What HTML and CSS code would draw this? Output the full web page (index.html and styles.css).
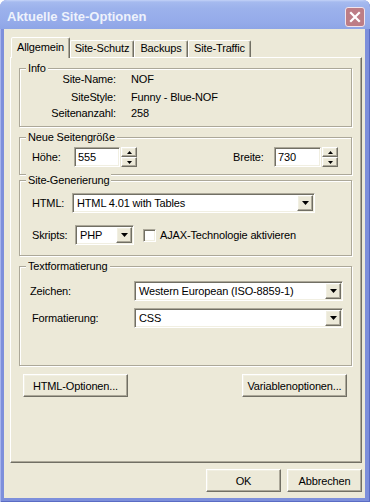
FILE: index.html
```html
<!DOCTYPE html>
<html lang="de">
<head>
    <meta charset="UTF-8">
    <title>Aktuelle Site-Optionen</title>
    <link rel="stylesheet" href="styles.css">
</head>
<body>
    <div class="window">
        <div class="titlebar">
            <span class="title">Aktuelle Site-Optionen</span>
            <span class="close">
                <svg width="12" height="12" viewBox="0 0 12 12"><path d="M2 2 L10 10 M10 2 L2 10" stroke="#fff" stroke-width="2.2" stroke-linecap="square"/></svg>
            </span>
        </div>

        <div class="client">
            <div class="tabs">
                <div class="tab active tab-allgemein">Allgemein</div>
                <div class="tab tab-schutz">Site-Schutz</div>
                <div class="tab tab-backups">Backups</div>
                <div class="tab tab-traffic">Site-Traffic</div>
            </div>

            <div class="panel">
                <div class="group group-info">
                    <div class="group-title">Info</div>
                    <div class="group-body info-grid">
                        <span class="info-label">Site-Name:</span><span>NOF</span>
                        <span class="info-label">SiteStyle:</span><span>Funny - Blue-NOF</span>
                        <span class="info-label">Seitenanzahl:</span><span>258</span>
                    </div>
                </div>

                <div class="group group-size">
                    <div class="group-title">Neue Seitengröße</div>
                    <div class="group-body">
                        <div class="row">
                            <span class="lbl lbl-hoehe">Höhe:</span>
                            <span class="field edit edit-hoehe">555</span>
                            <span class="spin">
                                <span class="btn3d spin-btn"><svg width="5" height="3" viewBox="0 0 5 3"><path d="M2.5 0 L5 3 L0 3 Z" fill="#000"/></svg></span>
                                <span class="btn3d spin-btn"><svg width="5" height="3" viewBox="0 0 5 3"><path d="M0 0 L5 0 L2.5 3 Z" fill="#000"/></svg></span>
                            </span>
                            <span class="lbl lbl-breite">Breite:</span>
                            <span class="field edit edit-breite">730</span>
                            <span class="spin">
                                <span class="btn3d spin-btn"><svg width="5" height="3" viewBox="0 0 5 3"><path d="M2.5 0 L5 3 L0 3 Z" fill="#000"/></svg></span>
                                <span class="btn3d spin-btn"><svg width="5" height="3" viewBox="0 0 5 3"><path d="M0 0 L5 0 L2.5 3 Z" fill="#000"/></svg></span>
                            </span>
                        </div>
                    </div>
                </div>

                <div class="group group-gen">
                    <div class="group-title">Site-Generierung</div>
                    <div class="group-body">
                        <div class="row">
                            <span class="lbl lbl-html">HTML:</span>
                            <span class="field combo combo-html">
                                <span class="combo-text">HTML 4.01 with Tables</span>
                                <span class="btn3d combo-btn"><svg width="7" height="4" viewBox="0 0 7 4"><path d="M0 0 L7 0 L3.5 4 Z" fill="#000"/></svg></span>
                            </span>
                        </div>
                        <div class="row row-skripts">
                            <span class="lbl lbl-skripts">Skripts:</span>
                            <span class="field combo combo-skripts">
                                <span class="combo-text">PHP</span>
                                <span class="btn3d combo-btn"><svg width="7" height="4" viewBox="0 0 7 4"><path d="M0 0 L7 0 L3.5 4 Z" fill="#000"/></svg></span>
                            </span>
                            <span class="field checkbox"></span>
                            <span class="check-label">AJAX-Technologie aktivieren</span>
                        </div>
                    </div>
                </div>

                <div class="group group-text">
                    <div class="group-title">Textformatierung</div>
                    <div class="group-body">
                        <div class="row">
                            <span class="lbl lbl-zeichen">Zeichen:</span>
                            <span class="field combo combo-wide">
                                <span class="combo-text">Western European (ISO-8859-1)</span>
                                <span class="btn3d combo-btn"><svg width="7" height="4" viewBox="0 0 7 4"><path d="M0 0 L7 0 L3.5 4 Z" fill="#000"/></svg></span>
                            </span>
                        </div>
                        <div class="row row-format">
                            <span class="lbl lbl-format">Formatierung:</span>
                            <span class="field combo combo-wide">
                                <span class="combo-text">CSS</span>
                                <span class="btn3d combo-btn"><svg width="7" height="4" viewBox="0 0 7 4"><path d="M0 0 L7 0 L3.5 4 Z" fill="#000"/></svg></span>
                            </span>
                        </div>
                    </div>
                </div>

                <div class="panel-buttons">
                    <span class="btn3d button button-wide">HTML-Optionen...</span>
                    <span class="btn3d button button-wide">Variablenoptionen...</span>
                </div>
            </div>

            <div class="dialog-buttons">
                <span class="btn3d button">OK</span>
                <span class="btn3d button">Abbrechen</span>
            </div>
        </div>
    </div>
</body>
</html>
```

FILE: styles.css
```css
* {
    box-sizing: border-box;
}

body {
    margin: 0;
    background: #fff;
    font-family: "Liberation Sans", Arial, sans-serif;
    font-size: 11px;
    letter-spacing: -0.15px;
    color: #000;
}

.window {
    width: 370px;
    height: 502px;
    display: flex;
    flex-direction: column;
    background: #7d8fdb;
    border-radius: 7px 7px 0 0;
    box-shadow: inset 1px 0 0 #a7b4ec, inset -1px -1px 0 #5a6cc4;
}

.titlebar {
    height: 29px;
    display: flex;
    align-items: center;
    padding: 4px 5px 0 7px;
    border-radius: 7px 7px 0 0;
    background: linear-gradient(#c3d2f7 0, #a5baef 2px, #9cb2ec 8px, #95abea 22px, #8ea5e6 29px);
}

.title {
    flex: 1;
    font-weight: bold;
    font-size: 13px;
    letter-spacing: 0;
    color: #eef2fc;
}

.close {
    width: 20px;
    height: 20px;
    display: flex;
    align-items: center;
    justify-content: center;
    background: #bd7d86;
    border: 1px solid #f1e4ec;
    border-radius: 3px;
}

.client {
    flex: 1;
    margin: 0 5px 4px 4px;
    padding: 8px 3px 0 6px;
    background: #ece9d8;
}

/* tabs */
.tabs {
    display: flex;
    align-items: flex-end;
    height: 20px;
    padding-left: 1px;
}

.tab {
    height: 17px;
    text-align: center;
    line-height: 15px;
    border: 1px solid;
    border-bottom: none;
    border-color: #fff #716f64 transparent #fff;
    border-radius: 2px 2px 0 0;
    box-shadow: inset -1px 0 0 #aca899;
}

.tab.active {
    position: relative;
    z-index: 1;
    height: 21px;
    margin-bottom: -1px;
    line-height: 18px;
    background: #ece9d8;
}

.tab-allgemein { width: 59px; }
.tab-schutz { width: 64px; }
.tab-backups { width: 54px; }
.tab-traffic { width: 63px; }

.panel {
    width: 352px;
    height: 406px;
    padding: 10px 0 0 8px;
    border: 1px solid;
    border-color: #fff #716f64 #716f64 #fff;
    box-shadow: inset -1px -1px 0 #aca899;
}

/* group boxes */
.group {
    width: 333px;
    border: 1px solid #aca899;
    box-shadow: 1px 1px 0 #fff, inset 1px 1px 0 #fff;
}

.group-title {
    width: fit-content;
    margin: -7px 0 -6px 6px;
    padding: 0 2px;
    line-height: 13px;
    background: #ece9d8;
}

.group-info .group-body {
    padding: 1px 0 6px 0;
}

.info-grid {
    display: grid;
    grid-template-columns: 96px auto;
    grid-template-rows: 18px 18px 14px;
    column-gap: 15px;
    align-items: center;
}

.info-label {
    text-align: right;
}

.group-size {
    margin-top: 10px;
}

.group-size .group-body {
    padding: 9px 13px 7px 12px;
}

.group-gen {
    margin-top: 5px;
}

.group-gen .group-body {
    padding: 12px 0 10px 12px;
}

.group-text {
    margin-top: 10px;
}

.group-text .group-body {
    padding: 14px 0 37px 10px;
}

.row {
    display: flex;
    align-items: center;
    height: 20px;
}

.row-skripts {
    margin-top: 12px;
}

.row-format {
    margin-top: 7px;
}

.lbl-hoehe { width: 42px; }
.lbl-breite { width: 41px; margin-left: auto; }
.lbl-html { width: 40px; }
.lbl-skripts { width: 43px; }
.lbl-zeichen { width: 104px; }
.lbl-format { width: 102px; margin-left: 2px; }

/* sunken fields */
.field {
    background: #fff;
    border: 1px solid;
    border-color: #aca899 #fff #fff #aca899;
    box-shadow: inset 1px 1px 0 #716f64, inset -1px -1px 0 #f1efe2;
}

.edit {
    height: 20px;
    padding: 0 3px;
    line-height: 18px;
}

.edit-hoehe { width: 46px; }
.edit-breite { width: 47px; }

.btn3d {
    background: #ece9d8;
    border: 1px solid;
    border-color: #fff #716f64 #716f64 #fff;
    box-shadow: inset -1px -1px 0 #aca899, inset 1px 1px 0 #f1efe2;
}

.spin {
    width: 16px;
    height: 20px;
    margin-left: 1px;
    display: flex;
    flex-direction: column;
}

.spin-btn {
    flex: 1;
    display: flex;
    align-items: center;
    justify-content: center;
}

.combo {
    height: 20px;
    padding: 1px;
    display: flex;
}

.combo-text {
    flex: 1;
    padding-left: 3px;
    line-height: 16px;
    white-space: nowrap;
    overflow: hidden;
}

.combo-btn {
    width: 16px;
    display: flex;
    align-items: center;
    justify-content: center;
}

.combo-html { width: 243px; }
.combo-skripts { width: 59px; }
.combo-wide { width: 209px; }

.checkbox {
    width: 13px;
    height: 13px;
    margin-left: 9px;
}

.check-label {
    margin-left: 4px;
}

/* buttons */
.button {
    width: 75px;
    height: 23px;
    display: flex;
    align-items: center;
    justify-content: center;
}

.button-wide {
    width: 105px;
}

.panel-buttons {
    display: flex;
    justify-content: space-between;
    margin: 8px 14px 0 4px;
}

.dialog-buttons {
    display: flex;
    justify-content: flex-end;
    gap: 6px;
    margin-top: 6px;
}
```
